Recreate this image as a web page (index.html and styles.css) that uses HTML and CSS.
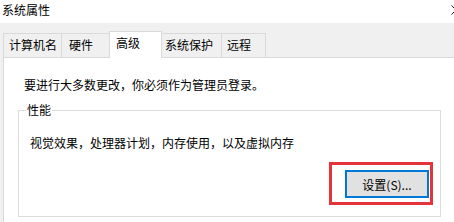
FILE: index.html
```html
<!DOCTYPE html>
<html lang="zh-CN">
<head>
    <meta charset="UTF-8">
    <title>系统属性</title>
    <link rel="stylesheet" href="styles.css">
</head>
<body>
    <div class="window">
        <div class="titlebar">
            <span class="title">系统属性</span>
            <svg class="close" width="10" height="10" viewBox="0 0 10 10">
                <path d="M0.5 0.5 L9.5 9.5 M9.5 0.5 L0.5 9.5" stroke="#222" stroke-width="1"/>
            </svg>
        </div>
        <div class="frame">
            <div class="tabs">
                <div class="tab tab-name">计算机名</div>
                <div class="tab tab-hw">硬件</div>
                <div class="tab tab-adv active">高级</div>
                <div class="tab tab-prot">系统保护</div>
                <div class="tab tab-remote">远程</div>
            </div>
            <div class="panel">
                <div class="note">要进行大多数更改，你必须作为管理员登录。</div>
                <fieldset class="group">
                    <legend>性能</legend>
                    <div class="group-text">视觉效果，处理器计划，内存使用，以及虚拟内存</div>
                    <div class="actions">
                        <div class="highlight">
                            <button class="btn">设置(S)...</button>
                        </div>
                    </div>
                </fieldset>
            </div>
        </div>
    </div>
</body>
</html>
```

FILE: styles.css
```css
* {
    box-sizing: border-box;
}
html, body {
    margin: 0;
    padding: 0;
    width: 454px;
    height: 222px;
    overflow: hidden;
    background: #fff;
}
body {
    font-family: "Noto Sans CJK SC", "Liberation Sans", sans-serif;
    font-size: 12px;
    color: #000;
}
.titlebar {
    height: 23px;
    display: flex;
    justify-content: space-between;
    align-items: center;
    padding-left: 2px;
    background: #fff;
    overflow: hidden;
}
.title {
    line-height: 16px;
    margin-top: -3px;
}
.close {
    flex: none;
    margin-right: -7px;
    margin-top: -4px;
}
.frame {
    background: #f0f0f0;
    padding-left: 3px;
    height: 199px;
    display: flex;
    flex-direction: column;
}
.tabs {
    height: 34px;
    display: flex;
    align-items: flex-end;
    position: relative;
    z-index: 1;
}
.tab {
    height: 24px;
    line-height: 22px;
    padding-left: 5px;
    border: 1px solid #d9d9d9;
    border-bottom: none;
    border-left: none;
    background: #f0f0f0;
}
.tab:first-child {
    border-left: 1px solid #d9d9d9;
}
.tab-name { width: 59px; }
.tab-hw { width: 48px; padding-left: 7px; }
.tab-adv { width: 52px; }
.tab-prot { width: 60px; padding-left: 3px; }
.tab-remote { width: 44px; padding-left: 5px; }
.tab.active {
    height: 27px;
    margin-bottom: -1px;
    line-height: 22px;
    padding-left: 6px;
    background: #fff;
    border-left: 1px solid #d9d9d9;
    margin-left: -1px;
    width: 53px;
}
.panel {
    flex: 1;
    background: #fff;
    border-top: 1px solid #d9d9d9;
    border-left: 1px solid #d9d9d9;
    padding: 19px 13px 0 20px;
}
.note {
    line-height: 16px;
}
.group {
    margin: 9px 0 0 -6px;
    padding: 0 7px 11px 7px;
    border: 1px solid #dcdcdc;
}
.group legend {
    padding: 0 1px;
    line-height: 16px;
}
.group-text {
    margin-top: 17px;
    margin-left: 4px;
    line-height: 16px;
}
.actions {
    display: flex;
    justify-content: flex-end;
    margin-top: 11px;
}
.highlight {
    border: 3px solid #e5333b;
    padding: 5px 1px 4px 13px;
}
.btn {
    width: 84px;
    height: 28px;
    font-family: "Noto Sans CJK SC", "Liberation Sans", sans-serif;
    font-size: 12px;
    color: #000;
    background: #e1e1e1;
    border: 2px solid #0078d7;
    padding: 0;
}
```
